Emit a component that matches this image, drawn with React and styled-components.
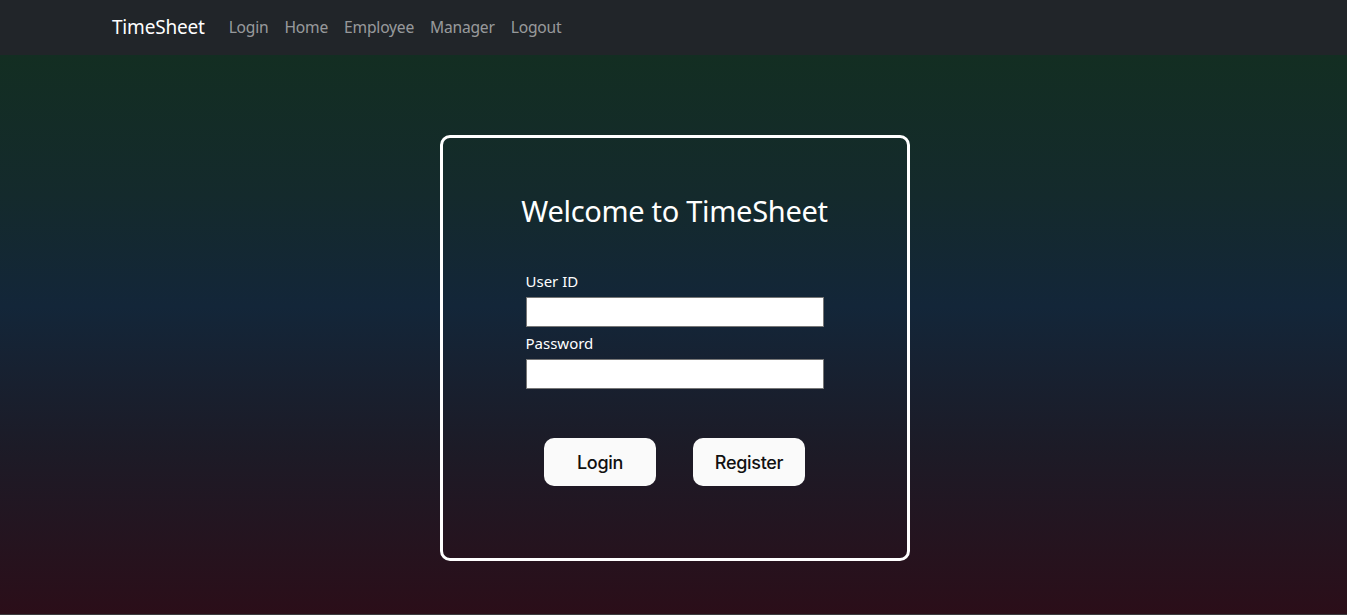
import React from 'react';
import styled, { createGlobalStyle } from 'styled-components';

const GlobalStyle = createGlobalStyle`
  html, body {
    margin: 0;
    padding: 0;
    background: #3a3a3c;
  }
  body {
    font-family: "Noto Sans", "Open Sans", sans-serif;
  }
  * {
    box-sizing: border-box;
  }
`;

/* navbar */

const NavBar = styled.nav`
  height: 55px;
  background: #212529;
  display: flex;
  align-items: center;
  padding-left: 112px;
  padding-bottom: 1px;
`;

const Brand = styled.a`
  font-size: 19px;
  color: #ffffff;
  text-decoration: none;
  margin-right: 16px;
  letter-spacing: -0.2px;
`;

const NavLinks = styled.div`
  display: flex;
  align-items: center;
`;

const NavLink = styled.a`
  font-size: 15.6px;
  color: rgba(255, 255, 255, 0.55);
  text-decoration: none;
  padding: 0 8px;
  letter-spacing: -0.2px;
`;

/* telo strani */

const Page = styled.main`
  height: 559px;
  background: linear-gradient(
    to bottom,
    #132e22 0%,
    #142a2c 25%,
    #132639 45%,
    #1c1b27 70%,
    #2b0e19 100%
  );
  padding-top: 80px;
  padding-left: 2px;
  display: flex;
  justify-content: center;
  align-items: flex-start;
`;

const Card = styled.section`
  width: 470px;
  height: 426px;
  border: 3px solid #ffffff;
  border-radius: 10px;
  display: flex;
  flex-direction: column;
  align-items: center;
  padding-top: 53px;
`;

const Title = styled.h1`
  margin: 0;
  font-weight: 400;
  font-size: 29px;
  line-height: 40px;
  color: #ffffff;
  letter-spacing: -0.3px;
`;

const Form = styled.form`
  width: 298px;
  margin-top: 39px;
  display: flex;
  flex-direction: column;
`;

const Label = styled.label`
  font-size: 15px;
  line-height: 22px;
  color: #ffffff;
  margin-bottom: 5px;
`;

const Input = styled.input`
  width: 298px;
  height: 30px;
  border: 1px solid #767676;
  background: #ffffff;
  margin: 0 0 ${(p) => p.$gap || 0}px;
  padding: 2px 6px;
  font-size: 14px;
`;

const Buttons = styled.div`
  display: flex;
  gap: 37px;
  margin-top: 49px;
`;

const Button = styled.button`
  width: 112px;
  height: 48px;
  border: none;
  border-radius: 10px;
  background: #fafafa;
  color: #111111;
  font-family: "Inter", "Lato", sans-serif;
  font-size: 18px;
  font-weight: 500;
  letter-spacing: -0.3px;
  cursor: pointer;
`;

const App = () => {
  return (
    <>
      <GlobalStyle />
      <NavBar>
        <Brand href="#">TimeSheet</Brand>
        <NavLinks>
          <NavLink href="#">Login</NavLink>
          <NavLink href="#">Home</NavLink>
          <NavLink href="#">Employee</NavLink>
          <NavLink href="#">Manager</NavLink>
          <NavLink href="#">Logout</NavLink>
        </NavLinks>
      </NavBar>
      <Page>
        <Card>
          <Title>Welcome to TimeSheet</Title>
          <Form onSubmit={(e) => e.preventDefault()}>
            <Label htmlFor="uid">User ID</Label>
            <Input id="uid" type="text" $gap={5} />
            <Label htmlFor="pwd">Password</Label>
            <Input id="pwd" type="password" />
          </Form>
          <Buttons>
            <Button type="button">Login</Button>
            <Button type="button">Register</Button>
          </Buttons>
        </Card>
      </Page>
    </>
  );
};

export default App;
